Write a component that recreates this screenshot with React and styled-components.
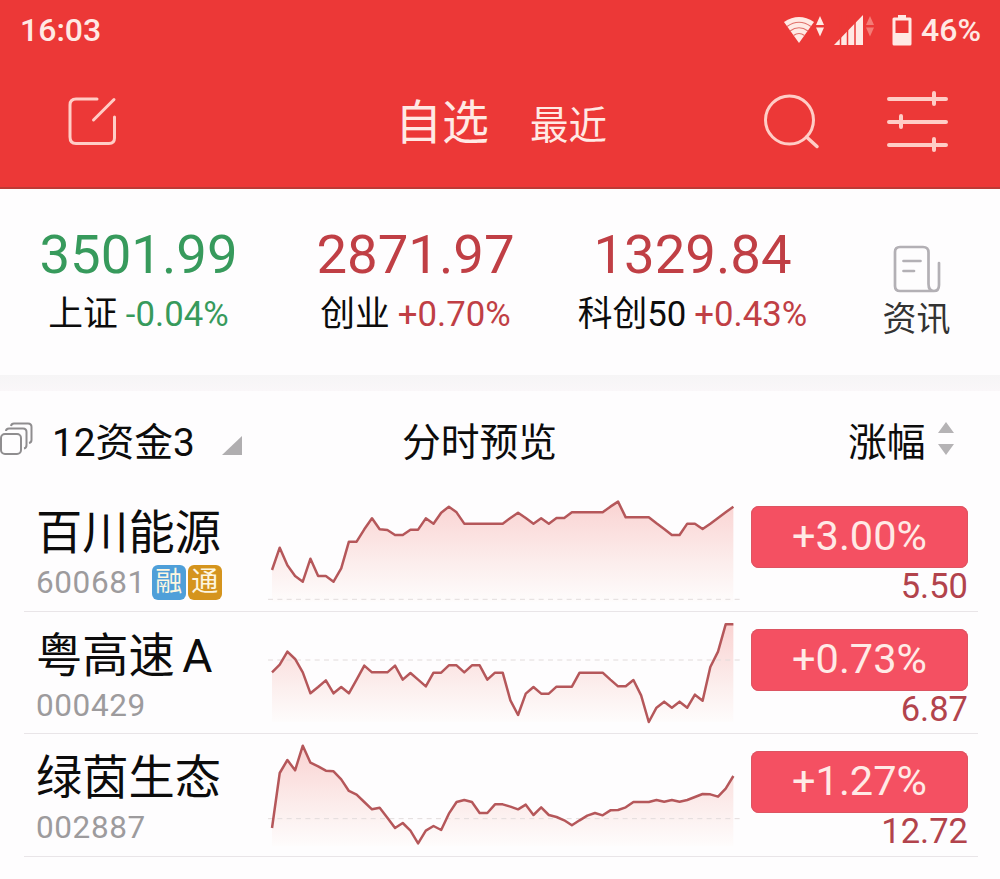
import styled, { createGlobalStyle } from 'styled-components';

const GlobalStyle = createGlobalStyle`
  * {
    box-sizing: border-box;
  }

  body {
    margin: 0;
    background: #fefdfe;
    color: #0c0c0c;
    font-family: Roboto, 'Noto Sans CJK SC', sans-serif;
  }
`;

const Screen = styled.div`
  width: 1000px;
  height: 879px;
  overflow: hidden;
`;

const Header = styled.header`
  height: 189px;
  background: #ec3837;
  border-bottom: 2px solid #bd3a35;
  color: #ffe9e4;
`;

const StatusBar = styled.div`
  display: flex;
  justify-content: space-between;
  align-items: center;
  height: 60px;
  padding: 0 19px 0 20px;
  font-size: 32px;
  font-weight: 500;
`;

const StatusIcons = styled.div`
  display: flex;
  align-items: center;
  gap: 8px;
`;

const NavBar = styled.nav`
  display: grid;
  grid-template-columns: 388px 1fr 236px;
  height: 127px;
`;

const NavLeft = styled.div`
  padding: 34px 0 0 66px;
`;

const NavTabs = styled.div`
  display: flex;
  align-items: baseline;
  gap: 41px;
  padding: 29px 0 0 7px;
`;

const NavTab = styled.span`
  font-size: ${(props) => (props.$active ? '47px' : '38.5px')};
  line-height: 68px;
`;

const NavRight = styled.div`
  display: flex;
  gap: 64px;
  padding-top: 30px;
`;

const Indices = styled.section`
  display: grid;
  grid-template-columns: 277px 277px 277px 1fr;
  height: 186px;
  padding-top: 33px;
  text-align: center;
`;

const IndexItem = styled.div`
  color: ${(props) => (props.$down ? '#379a5c' : '#c03f45')};
`;

const IndexValue = styled.div`
  font-size: 54.5px;
  line-height: 64px;
`;

const IndexChange = styled.div`
  font-size: 34.75px;
  line-height: 56px;
  white-space: nowrap;
`;

const IndexName = styled.span`
  margin-right: 8px;
  color: #0c0c0c;
`;

const News = styled.div`
  display: flex;
  flex-direction: column;
  align-items: center;
  padding: 23px 0 0 2px;
  color: #333;
  font-size: 34px;
  line-height: 52px;
`;

const Divider = styled.div`
  height: 16px;
  background: linear-gradient(#f6f5f6, #faf7f9);
`;

const ListHead = styled.div`
  display: grid;
  grid-template-columns: 402px 1fr 152px;
  align-items: center;
  height: 98px;
  padding-bottom: 3px;
  font-size: 38.75px;
`;

const GroupName = styled.div`
  display: flex;
  align-items: center;

  span {
    margin: 0 27px 0 19px;
  }
`;

const GroupArrow = styled.svg`
  margin-top: 13px;
`;

const SortLabel = styled.div`
  display: flex;
  align-items: center;
  gap: 12px;
`;

const Row = styled.div`
  display: flex;
  height: 122.67px;
  margin: 0 22px 0 24px;
  padding: 0 10px 0 12px;
  border-bottom: 1px solid #e9e5e8;
`;

const Stock = styled.div`
  width: 232px;
  padding-top: 11px;
`;

const StockName = styled.div`
  font-size: 46.25px;
  line-height: 66px;
  word-spacing: -4px;
  white-space: nowrap;
`;

const StockMeta = styled.div`
  display: flex;
  align-items: center;
  gap: 2px;
  height: 33px;
`;

const Code = styled.span`
  margin-right: 4px;
  color: #9d9b9d;
  font-size: 31.5px;
  letter-spacing: 0.6px;
`;

const Tag = styled.span`
  width: 34px;
  height: 35px;
  border-radius: 6px;
  background: ${(props) => props.$color};
  color: #fdf6e0;
  font-size: 27px;
  line-height: 34px;
  text-align: center;
`;

const Quote = styled.div`
  width: 217px;
  margin-left: 11px;
  padding-top: 17px;
`;

const Pill = styled.div`
  height: 62px;
  border-radius: 8px;
  background: #f45062;
  box-shadow: inset 0 0 0 1px #dd5462;
  color: #ffeae6;
  font-size: 41.5px;
  line-height: 59px;
  text-align: center;
`;

const Price = styled.div`
  color: #b2434c;
  font-size: 34.5px;
  line-height: 37px;
  text-align: right;
`;

const indices = [
  { name: '上证', value: '3501.99', change: '-0.04%', down: true },
  { name: '创业', value: '2871.97', change: '+0.70%' },
  { name: '科创50', value: '1329.84', change: '+0.43%' },
];

// line and base are measured downwards, three units to a pixel
const stocks = [
  {
    name: '百川能源',
    code: '600681',
    change: '+3.00%',
    price: '5.50',
    tags: [
      { text: '融', color: '#4f9fd9' },
      { text: '通', color: '#d5941d' },
    ],
    top: -3,
    base: 328,
    line: [
      240, 173, 226, 258, 275, 206, 258, 258, 275, 235, 155, 155, 118, 85, 118,
      120, 135, 135, 119, 119, 85, 101, 68, 50, 67, 101, 101, 101, 101, 101,
      101, 84, 68, 84, 101, 85, 101, 84, 84, 67, 67, 67, 67, 67, 50, 35, 82, 82,
      82, 82, 100, 117, 135, 135, 101, 101, 117, 101, 84, 67, 50,
    ],
  },
  {
    name: '粤高速 A',
    code: '000429',
    change: '+0.73%',
    price: '6.87',
    tags: [],
    top: 5,
    base: 149,
    line: [
      186, 163, 124, 146, 186, 249, 230, 210, 249, 230, 249, 208, 166, 186, 186,
      186, 166, 208, 188, 208, 228, 187, 187, 165, 165, 186, 165, 165, 208, 187,
      187, 270, 314, 250, 230, 250, 250, 229, 229, 229, 187, 187, 187, 187, 208,
      228, 228, 209, 255, 335, 292, 274, 292, 274, 292, 253, 271, 170, 124, 42,
      42,
    ],
  },
  {
    name: '绿茵生态',
    code: '002887',
    change: '+1.27%',
    price: '12.72',
    tags: [],
    top: -2,
    base: 252,
    line: [
      280, 115, 76, 107, 33, 84, 95, 108, 110, 134, 169, 180, 202, 224, 219,
      249, 280, 265, 288, 326, 288, 274, 286, 237, 202, 196, 202, 235, 235, 209,
      209, 216, 224, 210, 241, 218, 241, 247, 257, 272, 257, 243, 235, 242, 227,
      226, 218, 202, 202, 202, 196, 201, 196, 201, 196, 187, 178, 179, 186, 162,
      124,
    ],
  },
];

function Chart({ id, line, base, top }) {
  const points = line.map((y, i) => `${(12 + i * 23.07).toFixed(1)},${y}`);
  const peak = Math.min(...line);

  return (
    <svg width="472" height="121.67" viewBox={`0 ${top} 1416 365`}>
      <defs>
        <linearGradient
          id={id}
          gradientUnits="userSpaceOnUse"
          x1="0"
          y1={peak}
          x2="0"
          y2="335"
        >
          <stop offset="0" stopColor="#fad3d2" />
          <stop offset="0.65" stopColor="#fcefee" />
          <stop offset="1" stopColor="#fefcfc" />
        </linearGradient>
      </defs>
      <polygon
        points={`12,335 ${points.join(' ')} 1396,335`}
        fill={`url(#${id})`}
      />
      <path
        d={`M0 ${base}H1416`}
        stroke="#e2dcdc"
        strokeWidth="3"
        strokeDasharray="15 13"
      />
      <polyline
        points={points.join(' ')}
        fill="none"
        stroke="#b5575a"
        strokeWidth="7.500"
        strokeLinejoin="round"
      />
    </svg>
  );
}

function WifiIcon() {
  return (
    <svg width="42" height="30" viewBox="0 0 42 30">
      <path d="M1 7Q16-3 31 7L16 28Z" fill="currentColor" />
      <g fill="none" stroke="#e0706a" strokeWidth="1.200">
        <path d="M4 11.500Q16 3 28 11.500" />
        <path d="M7 16Q16 9.500 25 16" />
        <path d="M10.500 20.500Q16 16.500 21.500 20.500" />
      </g>
      <path d="M33 10l4-9 4 9zM33 12.500l4 9 4-9z" fill="currentColor" />
    </svg>
  );
}

function SignalIcon() {
  return (
    <svg width="51" height="31" viewBox="0 0 51 31">
      <path d="M1 30L30 0V30Z" fill="currentColor" />
      <path
        d="M7.500 0V31M14.500 0V31M22 0V31"
        stroke="#ec3837"
        strokeWidth="1.500"
      />
      <path d="M33 10l4-9 4 9zM33 12.500l4 9 4-9z" fill="#f47c76" />
    </svg>
  );
}

function BatteryIcon() {
  return (
    <svg width="21" height="32" viewBox="0 0 21 32">
      <path d="M6 1h8v4H6z" fill="currentColor" />
      <path
        d="M2 5h16v25H2z"
        fill="none"
        stroke="currentColor"
        strokeWidth="3"
        strokeLinejoin="round"
      />
      <path d="M2 19h16v11H2z" fill="currentColor" />
    </svg>
  );
}

function EditIcon() {
  return (
    <svg
      width="52"
      height="54"
      viewBox="0 0 52 54"
      fill="none"
      stroke="#ffcdc6"
      strokeWidth="3"
      strokeLinecap="round"
      strokeLinejoin="round"
    >
      <path d="M31 5H10Q4 5 4 11V43Q4 49.500 10 49.500H43Q48.500 49.500 48.500 44V23" />
      <path d="M27.500 26L48 5.500" />
    </svg>
  );
}

function SearchIcon() {
  return (
    <svg
      width="58"
      height="62"
      viewBox="0 0 58 62"
      fill="none"
      stroke="#ffcdc6"
      strokeWidth="3"
      strokeLinecap="round"
    >
      <circle cx="25.500" cy="30" r="24" />
      <path d="M42.500 47L53 56.500" strokeWidth="3.500" />
    </svg>
  );
}

function FilterIcon() {
  return (
    <svg
      width="64"
      height="66"
      viewBox="0 0 64 66"
      fill="none"
      stroke="#ffcdc6"
      strokeWidth="4"
      strokeLinecap="round"
    >
      <path d="M3 9H60M3 32H60M3 55H60" />
      <path d="M48 3V14M15 26V37M48 49V60" />
    </svg>
  );
}

function NewsIcon() {
  return (
    <svg
      width="48"
      height="48"
      viewBox="0 0 48 48"
      fill="none"
      stroke="#b3b0b5"
      strokeWidth="2.700"
      strokeLinecap="round"
    >
      <path d="M42 46H7Q2 46 2 41V7Q2 2 7 2H30Q35.500 2 35.500 7.500V39Q35.500 46 41 46Q46 46 46 40V18" />
      <path d="M10.500 16H27.500M10.500 26H21" />
    </svg>
  );
}

function StackIcon() {
  return (
    <svg
      width="33"
      height="34"
      viewBox="0 0 33 34"
      fill="none"
      stroke="#8f8d8f"
      strokeWidth="2"
    >
      <rect x="1" y="12" width="20" height="20" rx="4" />
      <path d="M6 9Q6 6.500 9 6.500H23Q26.500 6.500 26.500 10V23Q26.500 26 24 26.500" />
      <path d="M11 4Q11.500 1.500 14 1.500H28Q31.500 1.500 31.500 5V18Q31.500 20.500 29 21" />
    </svg>
  );
}

function App() {
  return (
    <Screen>
      <GlobalStyle />

      <Header>
        <StatusBar>
          <span>16:03</span>
          <StatusIcons>
            <WifiIcon />
            <SignalIcon />
            <BatteryIcon />
            <span>46%</span>
          </StatusIcons>
        </StatusBar>
        <NavBar>
          <NavLeft>
            <EditIcon />
          </NavLeft>
          <NavTabs>
            <NavTab $active>自选</NavTab>
            <NavTab>最近</NavTab>
          </NavTabs>
          <NavRight>
            <SearchIcon />
            <FilterIcon />
          </NavRight>
        </NavBar>
      </Header>

      <Indices>
        {indices.map((item) => (
          <IndexItem key={item.name} $down={item.down}>
            <IndexValue>{item.value}</IndexValue>
            <IndexChange>
              <IndexName>{item.name}</IndexName>
              {item.change}
            </IndexChange>
          </IndexItem>
        ))}
        <News>
          <NewsIcon />
          资讯
        </News>
      </Indices>

      <Divider />

      <ListHead>
        <GroupName>
          <StackIcon />
          <span>12资金3</span>
          <GroupArrow width="20" height="19" viewBox="0 0 20 19">
            <path d="M20 0V19H0Z" fill="#b0aeb0" />
          </GroupArrow>
        </GroupName>
        <div>分时预览</div>
        <SortLabel>
          涨幅
          <svg width="16" height="33" viewBox="0 0 16 33">
            <path d="M8 0L16 11H0ZM8 33L16 22H0Z" fill="#b5b3b5" />
          </svg>
        </SortLabel>
      </ListHead>

      {stocks.map((stock) => (
        <Row key={stock.code}>
          <Stock>
            <StockName>{stock.name}</StockName>
            <StockMeta>
              <Code>{stock.code}</Code>
              {stock.tags.map((tag) => (
                <Tag key={tag.text} $color={tag.color}>
                  {tag.text}
                </Tag>
              ))}
            </StockMeta>
          </Stock>
          <Chart
            id={`fill-${stock.code}`}
            line={stock.line}
            base={stock.base}
            top={stock.top}
          />
          <Quote>
            <Pill>{stock.change}</Pill>
            <Price>{stock.price}</Price>
          </Quote>
        </Row>
      ))}
    </Screen>
  );
}

export default App;
